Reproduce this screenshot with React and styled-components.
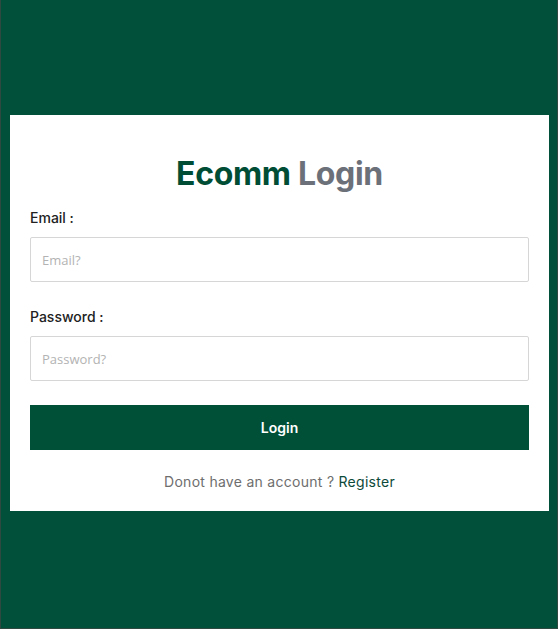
import React from "react";
import styled, { createGlobalStyle } from "styled-components";

const GlobalStyle = createGlobalStyle`
  html, body {
    margin: 0;
    padding: 0;
    background: #01503a;
  }
  * {
    box-sizing: border-box;
  }
`;

const App = () => {
  return (
    <Page>
      <GlobalStyle />
      <Card>
        <Title>
          <Brand>Ecomm</Brand> <Muted>Login</Muted>
        </Title>
        <Field $space={26}>
          <Label>Email :</Label>
          <Input type="email" placeholder="Email?" />
        </Field>
        <Field $space={24}>
          <Label>Password :</Label>
          <Input type="password" placeholder="Password?" />
        </Field>
        <Button type="button">Login</Button>
        <Footer>
          Donot have an account ? <RegisterLink href="#">Register</RegisterLink>
        </Footer>
      </Card>
    </Page>
  );
};

const Page = styled.div`
  width: 558px;
  height: 629px;
  display: flex;
  align-items: flex-start;
  justify-content: flex-start;
  padding: 115px 0 0 9px;
  background: #01503a;
  border: 1px solid #2e4a40;
  border-top: none;
`;

const Card = styled.div`
  flex-shrink: 0;
  width: 539px;
  height: 396px;
  background: #ffffff;
  padding: 37px 20px 0;
  display: flex;
  flex-direction: column;
`;

const Title = styled.h1`
  margin: 0 0 13px;
  text-align: center;
  font-family: Inter, "Liberation Sans", sans-serif;
  font-size: 32px;
  font-weight: 700;
  letter-spacing: -0.01em;
  line-height: 44px;
`;

const Brand = styled.span`
  color: #004d35;
`;

const Muted = styled.span`
  color: #6b7079;
`;

const Field = styled.div`
  display: flex;
  flex-direction: column;
  gap: 10px;
  margin-bottom: ${(p) => p.$space}px;
`;

const Label = styled.label`
  font-family: Inter, "Liberation Sans", sans-serif;
  font-size: 14px;
  font-weight: 500;
  color: #222222;
  line-height: 18px;
`;

const Input = styled.input`
  height: 45px;
  width: 100%;
  border: 1px solid #d6d6d6;
  border-radius: 2px;
  padding: 0 11px;
  font-family: "Open Sans", "Liberation Sans", sans-serif;
  font-size: 13px;
  color: #333;
  outline: none;

  &::placeholder {
    color: #b3b3b3;
  }
`;

const Button = styled.button`
  height: 45px;
  width: 100%;
  border: none;
  background: #004f37;
  color: #ffffff;
  font-family: Inter, "Liberation Sans", sans-serif;
  font-size: 14px;
  font-weight: 600;
  cursor: pointer;
`;

const Footer = styled.p`
  margin: 23px 0 0;
  text-align: center;
  font-family: Inter, "Liberation Sans", sans-serif;
  font-size: 14px;
  letter-spacing: 0.02em;
  color: #6e6e6e;
`;

const RegisterLink = styled.a`
  color: #0d4a3a;
  text-decoration: none;
`;

export default App;
